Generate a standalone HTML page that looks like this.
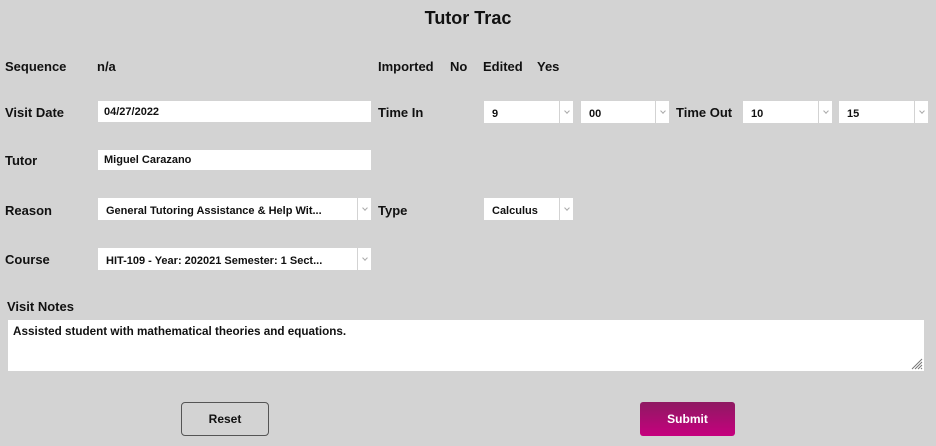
<!DOCTYPE html>
<html><head><meta charset="utf-8"><style>
body{margin:0;width:936px;height:446px;background:#d3d3d3;font-family:"Liberation Sans",Arial,sans-serif;position:relative;overflow:hidden;color:#111}
.a{position:absolute}
.l{position:absolute;font-weight:bold;font-size:13px;line-height:16px}
.in{position:absolute;background:#fff;font-weight:bold;font-size:11px;line-height:23px;box-sizing:border-box;padding-left:6px;height:21px}
.dd{position:absolute;background:#fff;font-weight:bold;font-size:11px;height:22px;box-sizing:border-box;padding-left:8px;line-height:26px}
.dd:after{content:"";position:absolute;right:0;top:0;width:13px;height:22px;border-left:1px solid #d3d3d3}
.dd i{position:absolute;right:4px;top:8px;width:3px;height:3px;border-right:1px solid #aaa;border-bottom:1px solid #aaa;transform:rotate(45deg)}
</style></head><body>
<div class="a" style="left:0;width:936px;top:8px;text-align:center;font-weight:bold;font-size:18px">Tutor Trac</div>
<div class="l" style="left:5px;top:59px">Sequence</div>
<div class="l" style="left:97px;top:59px">n/a</div>
<div class="l" style="left:378px;top:59px">Imported</div>
<div class="l" style="left:450px;top:59px">No</div>
<div class="l" style="left:483px;top:59px">Edited</div>
<div class="l" style="left:537px;top:59px">Yes</div>

<div class="l" style="left:5px;top:105px">Visit Date</div>
<div class="in" style="left:98px;top:101px;width:273px">04/27/2022</div>
<div class="l" style="left:378px;top:105px">Time In</div>
<div class="dd" style="left:484px;top:101px;width:89px">9<i></i></div>
<div class="dd" style="left:581px;top:101px;width:88px">00<i></i></div>
<div class="l" style="left:676px;top:105px">Time Out</div>
<div class="dd" style="left:743px;top:101px;width:89px">10<i></i></div>
<div class="dd" style="left:839px;top:101px;width:89px">15<i></i></div>

<div class="l" style="left:5px;top:153px">Tutor</div>
<div class="in" style="left:98px;top:150px;width:273px;height:20px;line-height:21px">Miguel Carazano</div>

<div class="l" style="left:5px;top:203px">Reason</div>
<div class="dd" style="left:98px;top:198px;width:273px">General Tutoring Assistance &amp; Help Wit...<i></i></div>
<div class="l" style="left:378px;top:203px">Type</div>
<div class="dd" style="left:484px;top:198px;width:89px">Calculus<i></i></div>

<div class="l" style="left:5px;top:252px">Course</div>
<div class="dd" style="left:98px;top:248px;width:273px">HIT-109 - Year: 202021 Semester: 1 Sect...<i></i></div>

<div class="l" style="left:7px;top:299px">Visit Notes</div>
<div class="a" style="left:8px;top:320px;width:916px;height:51px;background:#fff;font-weight:bold;font-size:11.7px;box-sizing:border-box;padding:5px 5px">Assisted student with mathematical theories and equations.
<svg class="a" style="right:1px;bottom:1px" width="12" height="12"><path d="M11 1L1 11M11 4L4 11M11 7L7 11M11 10L10 11" stroke="#777" stroke-width="1"/></svg></div>

<div class="a" style="left:181px;top:402px;width:88px;height:34px;box-sizing:border-box;border:1px solid #555;border-radius:4px;text-align:center;line-height:32px;font-weight:bold;font-size:12px">Reset</div>
<div class="a" style="left:640px;top:402px;width:95px;height:34px;border-radius:3px;background:linear-gradient(#8e1a62,#c6007e);color:#fff;text-align:center;line-height:34px;font-weight:bold;font-size:12px">Submit</div>
</body></html>
